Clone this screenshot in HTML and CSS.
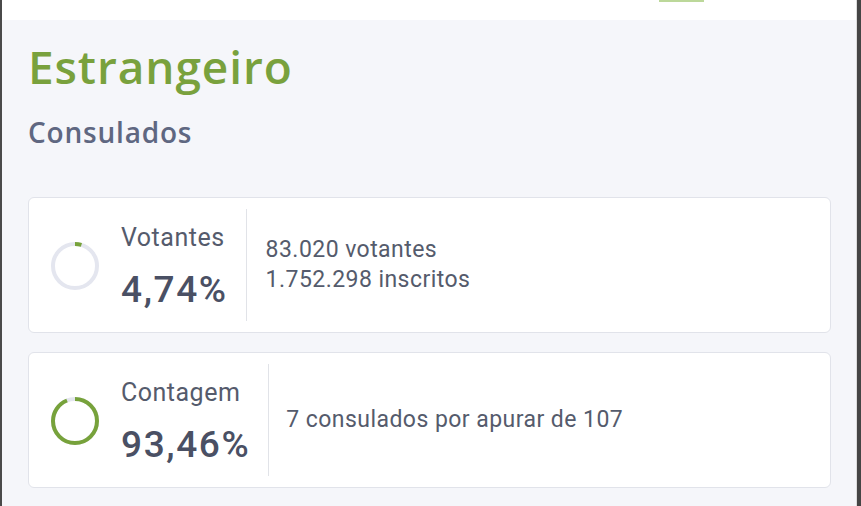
FILE: index.html
```html
<!DOCTYPE html>
<html lang="pt">
<head>
<meta charset="utf-8">
<title>Estrangeiro</title>
<link rel="stylesheet" href="styles.css">
</head>
<body>
<div class="frame">
  <div class="topbar"><span class="tab-mark"></span></div>
  <main class="content">
    <h1 class="title">Estrangeiro</h1>
    <h2 class="subtitle">Consulados</h2>
    <section class="card">
      <svg class="ring" viewBox="0 0 48 48" width="48" height="48">
        <circle class="ring-bg" cx="24" cy="24" r="22"/>
        <circle class="ring-fg" cx="24" cy="24" r="22" stroke-dasharray="6.55 200" transform="rotate(-90 24 24)"/>
      </svg>
      <div class="stat">
        <div class="stat-label">Votantes</div>
        <div class="stat-value">4,74%</div>
      </div>
      <div class="divider"></div>
      <div class="details">
        <div>83.020 votantes</div>
        <div>1.752.298 inscritos</div>
      </div>
    </section>
    <section class="card">
      <svg class="ring" viewBox="0 0 48 48" width="48" height="48">
        <circle class="ring-bg" cx="24" cy="24" r="22"/>
        <circle class="ring-fg" cx="24" cy="24" r="22" stroke-dasharray="129.2 200" transform="rotate(-90 24 24)"/>
      </svg>
      <div class="stat">
        <div class="stat-label">Contagem</div>
        <div class="stat-value">93,46%</div>
      </div>
      <div class="divider divider-wide"></div>
      <div class="details">
        <div>7 consulados por apurar de 107</div>
      </div>
    </section>
  </main>
</div>
</body>
</html>
```

FILE: styles.css
```css
html, body {
  margin: 0;
  padding: 0;
  height: 100%;
  background: #454545;
}

.frame {
  box-sizing: border-box;
  height: 506px;
  border-left: 2px solid #4a4a4a;
  border-right: 4px solid #454545;
  display: flex;
  flex-direction: column;
  overflow: hidden;
}

.topbar {
  height: 20px;
  flex: none;
  background: #ffffff;
  border-right: 1px solid #dcdcdc;
  display: flex;
  align-items: flex-start;
}

.tab-mark {
  display: block;
  margin-left: 657px;
  width: 45px;
  height: 2px;
  background: #bcd89a;
}

.content {
  flex: 1;
  background: #f5f6fa;
  border-right: 1px solid #dcdcdc;
  padding: 19px 25px 0 26px;
}

.title {
  margin: 0;
  font-family: "Open Sans", "Noto Sans", sans-serif;
  font-weight: 600;
  font-size: 46px;
  line-height: 55px;
  color: #79a13d;
  letter-spacing: 0.9px;
}

.subtitle {
  margin: 21px 0 0;
  font-family: "Open Sans", "Noto Sans", sans-serif;
  font-weight: 600;
  font-size: 28px;
  line-height: 35px;
  color: #5f6781;
  letter-spacing: 0.8px;
}

.card {
  margin-top: 47px;
  background: #ffffff;
  border: 1px solid #e1e3ea;
  border-radius: 6px;
  height: 136px;
  box-sizing: border-box;
  padding: 11px 22px;
  display: flex;
  align-items: stretch;
  font-family: Roboto, "Liberation Sans", sans-serif;
}

.card + .card {
  margin-top: 19px;
}

.ring {
  align-self: center;
  flex: none;
  margin-top: 2px;
}

.ring-bg {
  fill: none;
  stroke: #e4e6ef;
  stroke-width: 4;
}

.ring-fg {
  fill: none;
  stroke: #77a23b;
  stroke-width: 4;
}

.stat {
  margin-left: 22px;
  display: flex;
  flex-direction: column;
  justify-content: center;
}

.stat-label {
  font-size: 25px;
  line-height: 30px;
  color: #555b6c;
  letter-spacing: 0.5px;
}

.stat-value {
  margin-top: 19px;
  font-size: 37px;
  line-height: 36px;
  font-weight: 500;
  color: #4a5064;
  letter-spacing: 1.6px;
}

.divider {
  flex: none;
  width: 1px;
  background: #e1e3e8;
  margin: 0 19px 0 18px;
}

.divider-wide {
  margin-right: 17px;
}

.details {
  display: flex;
  flex-direction: column;
  justify-content: center;
  font-size: 23px;
  line-height: 30px;
  color: #555b6c;
  letter-spacing: 0.45px;
}
```
